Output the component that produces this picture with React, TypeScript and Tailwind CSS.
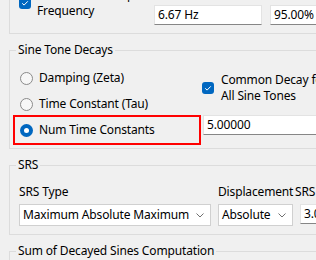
function CheckBox() {
  return (
    <span className="flex h-[12px] w-[12px] shrink-0 items-center justify-center rounded-[3px] bg-[#0067c0]">
      <svg viewBox="0 0 12 12" className="h-[12px] w-[12px]">
        <path d="M3.2 6.3 L5.1 8.1 L8.8 4.3" fill="none" stroke="white" strokeWidth="1" />
      </svg>
    </span>
  );
}

function Radio({ checked }: { checked?: boolean }) {
  if (checked) {
    return (
      <span className="flex h-[13px] w-[13px] shrink-0 items-center justify-center rounded-full bg-[#0067c0]">
        <span className="h-[5px] w-[5px] rounded-full bg-white" />
      </span>
    );
  }
  return <span className="h-[13px] w-[13px] shrink-0 rounded-full border border-[#8a8a8a] bg-[#f7f7f7]" />;
}

function TextBox({ value, className }: { value: string; className?: string }) {
  return (
    <div
      className={`h-[20px] border border-[#e3e3e3] border-b-[#868686] bg-white pl-[3px] leading-[18px] whitespace-nowrap ${className ?? ''}`}>
      {value}
    </div>
  );
}

function Combo({ value, className }: { value: string; className?: string }) {
  return (
    <div
      className={`flex h-[22px] items-center justify-between border border-[#d0d0d0] bg-white pr-[6px] pl-[3px] whitespace-nowrap ${className ?? ''}`}>
      <span>{value}</span>
      <svg viewBox="0 0 8 5" className="h-[5px] w-[8px]">
        <path d="M0.5 0.5 L4 4 L7.5 0.5" fill="none" stroke="#707070" strokeWidth="1" />
      </svg>
    </div>
  );
}

export default function App() {
  return (
    <div className="h-[260px] w-[316px] overflow-hidden bg-[#f0f0f0] font-['Noto_Sans',sans-serif] text-[12px] leading-[16px] tracking-[-0.15px] text-black">
      <div className="w-[420px]">
        {/* group continuing from above */}
        <div className="-mt-[13px] ml-[9px] flex items-start border-b border-l border-[#dcdcdc] pb-[8px]">
          <div className="flex w-[144px] items-center gap-[6px] pl-[9px]">
            <CheckBox />
            <div className="whitespace-nowrap">
              Auto Select Comp.
              <br />
              Frequency
            </div>
          </div>
          <TextBox value="6.67 Hz" className="mt-[18px] w-[108px]" />
          <TextBox value="95.00%" className="mt-[18px] ml-[8px] w-[80px]" />
        </div>

        <fieldset className="mt-[8px] ml-[9px] border border-r-0 border-[#dcdcdc]">
          <legend className="ml-[6px] px-[2px]">Sine Tone Decays</legend>
          <div className="flex items-start">
            <div className="ml-[3px] flex w-[188px] flex-col pt-[10px] pb-[3px]">
              <div className="flex h-[20px] items-center gap-[6px] pl-[7px]">
                <Radio />
                <span>Damping (Zeta)</span>
              </div>
              <div className="mt-[6px] flex h-[20px] items-center gap-[6px] pl-[7px]">
                <Radio />
                <span>Time Constant (Tau)</span>
              </div>
              <div className="mt-[1px] flex h-[30px] items-center gap-[6px] border-2 border-[#ff0000] pl-[5px]">
                <Radio checked />
                <span>Num Time Constants</span>
              </div>
            </div>
            <div className="ml-[1px] flex flex-col pt-[14px]">
              <div className="flex items-center gap-[7px]">
                <CheckBox />
                <div className="whitespace-nowrap">
                  Common Decay for
                  <br />
                  All Sine Tones
                </div>
              </div>
              <TextBox value="5.00000" className="mt-[11px] ml-[1px] w-[160px]" />
            </div>
          </div>
        </fieldset>

        <fieldset className="mt-[8px] ml-[9px] border border-r-0 border-[#dcdcdc]">
          <legend className="ml-[6px] px-[2px]">SRS</legend>
          <div className="flex items-start pt-[11px] pb-[8px] pl-[9px]">
            <div className="flex w-[192px] flex-col gap-[4px]">
              <span>SRS Type</span>
              <Combo value="Maximum Absolute Maximum" />
            </div>
            <div className="ml-[7px] flex w-[75px] flex-col gap-[4px]">
              <span className="whitespace-nowrap">Displacement</span>
              <Combo value="Absolute" />
            </div>
            <div className="ml-[2px] flex flex-col gap-[4px]">
              <span className="whitespace-nowrap">SRS Q</span>
              <TextBox value="3.00" className="ml-[5px] w-[60px]" />
            </div>
          </div>
        </fieldset>

        <fieldset className="mt-[8px] ml-[9px] border border-r-0 border-[#dcdcdc]">
          <legend className="ml-[6px] px-[2px]">Sum of Decayed Sines Computation</legend>
          <div className="h-[40px]" />
        </fieldset>
      </div>
    </div>
  );
}
